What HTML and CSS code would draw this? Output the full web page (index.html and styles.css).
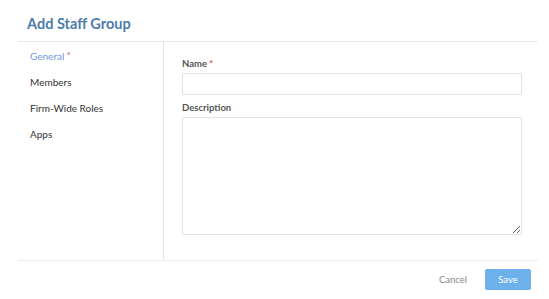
FILE: index.html
```html
<!DOCTYPE html>
<html lang="en">
<head>
    <meta charset="UTF-8">
    <meta name="viewport" content="width=device-width, initial-scale=1.0">
    <title>Add Staff Group</title>
    <link rel="stylesheet" href="styles.css">
</head>
<body>
    <div class="dialog">
        <div class="dialog-header">
            <h2 class="dialog-title">Add Staff Group</h2>
        </div>

        <div class="dialog-body">
            <ul class="side-nav">
                <li class="nav-item active">General <span class="req">*</span></li>
                <li class="nav-item">Members</li>
                <li class="nav-item">Firm-Wide Roles</li>
                <li class="nav-item">Apps</li>
            </ul>

            <form class="group-form">
                <label for="name">Name <span class="req">*</span></label>
                <input type="text" id="name" name="name">

                <label for="description">Description</label>
                <textarea id="description" name="description"></textarea>
            </form>
        </div>

        <div class="dialog-footer">
            <button type="button" class="btn-cancel">Cancel</button>
            <button type="button" class="btn-save">Save</button>
        </div>
    </div>
</body>
</html>
```

FILE: styles.css
```css
body {
    font-family: Lato, "Open Sans", sans-serif;
    margin: 0;
    padding: 0;
    background-color: #ffffff;
    color: #333333;
}
.dialog {
    padding: 0 11px 0 18px;
}
.dialog-header {
    height: 42px;
    border-bottom: 1px solid #e9e9e9;
    box-sizing: border-box;
}
.dialog-title {
    margin: 0;
    padding: 15px 0 0 9px;
    font-size: 14.5px;
    font-weight: bold;
    color: #4d7cab;
    line-height: 18px;
}
.dialog-body {
    display: flex;
    height: 218px;
}
.side-nav {
    list-style: none;
    margin: 0;
    padding: 7px 0 0 12px;
    width: 133px;
    border-right: 1px solid #e6e6e6;
}
.nav-item {
    font-size: 10px;
    line-height: 14px;
    margin-bottom: 12px;
    color: #333333;
}
.nav-item.active {
    color: #6c9be0;
}
.req {
    color: #e04a4a;
    font-size: 9px;
    vertical-align: top;
}
.group-form {
    flex: 1;
    display: flex;
    flex-direction: column;
    padding: 16px 16px 0 18px;
}
label {
    font-size: 9.5px;
    font-weight: bold;
    color: #555555;
    line-height: 12px;
    margin-bottom: 3px;
}
input, textarea {
    border: 1px solid #e2e2e2;
    border-radius: 2px;
    box-sizing: border-box;
    width: 100%;
    font-family: inherit;
}
input {
    height: 22px;
    margin-bottom: 7px;
}
textarea {
    height: 118px;
    resize: vertical;
}
.dialog-footer {
    border-top: 1px solid #ececec;
    display: flex;
    justify-content: flex-end;
    align-items: center;
    gap: 18px;
    padding: 8px 7px 0 0;
}
button {
    font-family: inherit;
    font-size: 9.5px;
    border: none;
    cursor: pointer;
}
.btn-cancel {
    background: none;
    color: #8a8a8a;
    padding: 0;
}
.btn-save {
    background-color: #6cb0ec;
    color: #ffffff;
    width: 46px;
    height: 21px;
    border-radius: 2px;
}
```
